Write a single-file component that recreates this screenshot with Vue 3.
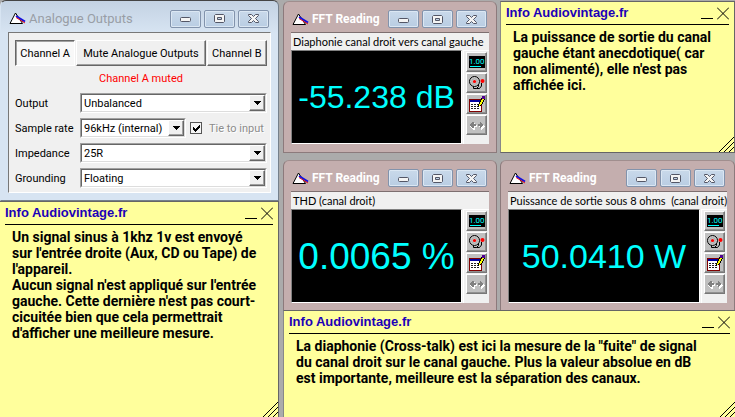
<script setup>
import { reactive } from 'vue'

const captions = ['Minimize', 'Maximize', 'Close']
const tools = ['digits', 'alarm', 'edit', 'range']

const fields = reactive([
  { id: 'output', label: 'Output', value: 'Unbalanced' },
  { id: 'rate', label: 'Sample rate', value: '96kHz (internal)', tie: true },
  { id: 'impedance', label: 'Impedance', value: '25R' },
  { id: 'grounding', label: 'Grounding', value: 'Floating' },
])

const columns = [
  [
    { id: 'outputs', kind: 'outputs', title: 'Analogue Outputs' },
    {
      id: 'note-signal',
      kind: 'note',
      text: "Un signal sinus à 1khz 1v est envoyé\nsur l'entrée droite (Aux, CD ou Tape) de\nl'appareil.\nAucun signal n'est appliqué sur l'entrée\ngauche. Cette dernière n'est pas court-\ncicuitée bien que cela permettrait\nd'afficher une meilleure mesure.",
    },
  ],
  [
    { id: 'crosstalk', kind: 'reading', title: 'FFT Reading', size: 'small', label: 'Diaphonie canal droit vers canal gauche', value: '-55.238 dB' },
    {
      id: 'note-power',
      kind: 'note',
      text: "La puissance de sortie du canal\ngauche étant anecdotique( car\nnon alimenté), elle n'est pas\naffichée ici.",
    },
    { id: 'thd', kind: 'reading', title: 'FFT Reading', size: 'large', label: 'THD (canal droit)', value: '0.0065 %' },
    { id: 'power', kind: 'reading', title: 'FFT Reading', size: 'medium', label: 'Puissance de sortie sous 8 ohms  (canal droit)', value: '50.0410 W' },
    {
      id: 'note-crosstalk',
      kind: 'note',
      wide: true,
      text: "La diaphonie (Cross-talk) est ici la mesure de la \"fuite\" de signal\ndu canal droit sur le canal gauche. Plus la valeur absolue en dB\nest importante, meilleure est la séparation des canaux.",
    },
  ],
]
</script>

<template>
  <main class="desktop">
    <div v-for="(column, i) in columns" :key="i" class="column">
      <template v-for="w in column" :key="w.id">
        <article v-if="w.kind === 'note'" class="note" :class="{ wide: w.wide }">
          <header>
            <h2>Info Audiovintage.fr</h2>
            <button type="button" aria-label="Minimize note">
              <svg width="12" height="13" viewBox="0 0 12 13"><path d="M0 11.5h12" stroke="#000" /></svg>
            </button>
            <button type="button" aria-label="Close note">
              <svg width="12" height="13" viewBox="0 0 12 13"><path d="M0 0.5l12 12M12 0.5l-12 12" stroke="#000" /></svg>
            </button>
          </header>
          <p>{{ w.text }}</p>
          <svg class="grip" width="15" height="15" viewBox="0 0 15 15">
            <path d="M0 15L15 0M5 15L15 5M10 15L15 10" stroke="#000" />
          </svg>
        </article>

        <section v-else class="window" :class="w.kind">
          <header class="titlebar">
            <svg class="logo" width="17" height="13" viewBox="0 0 17 13">
              <path d="M6.5 1L1 11.5H13.5Z" fill="#fff" stroke="#000" />
              <path d="M7 4L16 9.5" stroke="#1010e0" stroke-width="2" />
              <path d="M7 5.5L16 11" stroke="#e01020" stroke-width="1" />
            </svg>
            <h2>{{ w.title }}</h2>
            <div class="captions">
              <button v-for="c in captions" :key="c" type="button" :aria-label="c">
                <svg width="13" height="11" viewBox="0 0 13 11">
                  <rect v-if="c === 'Minimize'" x="1.5" y="4.5" width="10" height="4" rx="1" fill="#f4f4f4" stroke="#535666" />
                  <path v-else-if="c === 'Maximize'" d="M2.5 1.5h8l1 1v6l-1 1h-8l-1-1v-6zM4.5 4.5v2h4v-2z" fill="#f4f4f4" stroke="#535666" fill-rule="evenodd" />
                  <path v-else d="M1.5 1.5h3l2 2 2-2h3v1l-3 3 3 3v1h-3l-2-2-2 2h-3v-1l3-3-3-3z" fill="#f4f4f4" stroke="#535666" />
                </svg>
              </button>
            </div>
          </header>

          <form v-if="w.kind === 'outputs'" class="panel" @submit.prevent>
            <div class="channels">
              <button type="button" class="pressed">Channel A</button>
              <button type="button" class="mute">Mute Analogue Outputs</button>
              <button type="button">Channel B</button>
            </div>
            <p class="status">Channel A muted</p>
            <div v-for="f in fields" :key="f.id" class="field">
              <label :for="f.id">{{ f.label }}</label>
              <div class="combo" :class="{ narrow: f.tie }">
                <select :id="f.id" v-model="f.value">
                  <option>{{ f.value }}</option>
                </select>
                <span class="drop">
                  <svg width="7" height="4" viewBox="0 0 7 4" shape-rendering="crispEdges">
                    <path d="M0 0h7v1h-1v1h-1v1h-1v1h-1v-1h-1v-1h-1v-1h-1z" />
                  </svg>
                </span>
              </div>
              <label v-if="f.tie" class="tie">
                <span class="tick">
                  <input type="checkbox" checked />
                  <svg width="7" height="7" viewBox="0 0 7 7" shape-rendering="crispEdges">
                    <path d="M0 2h1v1h1v1h1v-1h1v-1h1v-1h1v-1h1v3h-1v1h-1v1h-1v1h-1v1h-1v-1h-1v-1h-1z" />
                  </svg>
                </span>
                Tie to input
              </label>
            </div>
          </form>

          <div v-else class="meter">
            <p class="caption">{{ w.label }}</p>
            <div class="meter-row">
              <output class="screen" :class="w.size">{{ w.value }}</output>
              <div class="tools">
                <button v-for="t in tools" :key="t" type="button" :aria-label="t">
                  <svg width="16" height="16" viewBox="0 0 16 16">
                    <g v-if="t === 'digits'">
                      <rect x="0" y="2" width="16" height="12" fill="#000" />
                      <text x="0" y="10" class="digits">1.00</text>
                      <rect x="1" y="12" width="11" height="1" fill="#0ff" />
                    </g>
                    <g v-else-if="t === 'alarm'">
                      <circle cx="5.5" cy="6.5" r="5" fill="#c8c8c8" stroke="#000" />
                      <circle cx="5.5" cy="6.5" r="2.8" fill="none" stroke="#aaa" />
                      <circle cx="5.5" cy="6.5" r="1.6" fill="#f00" />
                      <path d="M4.5 11.5v2h3l2-2v-2M7.5 13.5h3l2-2.5v-3" fill="none" stroke="#000" />
                      <circle cx="13.5" cy="6" r="2" fill="#f00" />
                    </g>
                    <g v-else-if="t === 'edit'" shape-rendering="crispEdges">
                      <rect x="0" y="3" width="13" height="13" fill="#800000" />
                      <rect x="1" y="4" width="11" height="11" fill="#fff" />
                      <rect x="1" y="4" width="11" height="2" fill="#0000a0" />
                      <path d="M2 8.5h9M2 10.5h9M2 12.5h9" stroke="#222" stroke-dasharray="2 1" />
                      <path d="M9 11V8h1V6h1V4h1V2h1V1h3v3h-1v2h-1v2h-1v1h-1v1h-2v1z" fill="#000" />
                      <path d="M10 10V8h1V6h1V4h1V3h2v1h-1v2h-1v2h-1v1h-1v1z" fill="#ff0" />
                      <rect x="13" y="0" width="3" height="3" fill="#500090" />
                    </g>
                    <g v-else shape-rendering="crispEdges">
                      <path d="M1 9h1v-1h1v-1h1v-1h2v2h2v2h-2v3h-2v-1h-1v-1h-1v-1h-1z M16 9h-1v-1h-1v-1h-1v-1h-1v2h-2v2h2v3h1v-1h1v-1h1v-1h1z" fill="#fff" />
                      <path d="M0 8h1v-1h1v-1h1v-1h2v2h2v2h-2v2h-2v-1h-1v-1h-1z M15 8h-1v-1h-1v-1h-1v-1h-1v2h-2v2h2v2h1v-1h1v-1h1v-1h1z" fill="#808080" />
                    </g>
                  </svg>
                </button>
              </div>
            </div>
          </div>
        </section>
      </template>
    </div>
  </main>
</template>

<style>
body {
  margin: 0;
  background: #ababab;
}
</style>

<style scoped>
.desktop {
  min-height: 100vh;
  display: grid;
  grid-template-columns: 279fr 452fr;
  column-gap: 4px;
  background: #ababab;
  font: 11px/13px Roboto, 'Liberation Sans', sans-serif;
  color: #000;
}
.column {
  display: grid;
  min-width: 0;
  grid-template-rows: auto 1fr;
}
.column + .column {
  grid-template-columns: 214fr 235fr;
  grid-template-rows: auto auto 1fr;
  column-gap: 3px;
}
h2, p { margin: 0; }
button, select, input { font: inherit; color: inherit; margin: 0; padding: 0; border-radius: 0; }
svg { display: block; flex: none; }

.window {
  box-sizing: border-box;
  min-width: 0;
  padding: 0 7px 7px;
  border: 1px solid #75808c;
  border-top-color: #444;
  border-radius: 6px 6px 0 0;
  background: linear-gradient(#c3d2e3, #d7e4f2 32px);
}
.outputs { border-left-color: #d7e4f2; }
.reading {
  margin-top: 1px;
  padding-bottom: 8px;
  border-color: #a08e8e #8c7a7c #8c7a7c;
  background: #c4aeae;
}
.note + .reading, .reading + .reading { margin-top: 7px; }

.titlebar {
  display: flex;
  align-items: center;
  height: 31px;
  padding: 4px 2px 0 1px;
  box-sizing: border-box;
}
.reading .titlebar { height: 30px; }
.titlebar h2 {
  flex: 1;
  margin-left: 3px;
  font-size: 13px;
  font-weight: normal;
  line-height: 18px;
  color: #999ea6;
  white-space: nowrap;
}
.reading h2 { font-weight: bold; font-size: 12px; color: #fff; }
.captions { display: flex; gap: 3px; }
.captions button {
  display: grid;
  place-items: center;
  width: 31px;
  height: 18px;
  border: 1px solid #8293ac;
  border-radius: 2px;
  background: linear-gradient(#c9d9ea, #b9cde3);
  box-shadow: inset 0 0 0 1px #dbe7f3;
}

.panel {
  padding: 7px 3px 4px 6px;
  border: 1px solid;
  border-color: #777 #fff #fff #777;
  background: #f0f0f0;
}
.channels { display: flex; gap: 1px; margin-bottom: 6px; }
.channels button {
  flex: 60 0 0;
  height: 26px;
  border: 1px solid;
  border-color: #fff #666 #666 #fff;
  box-shadow: inset -1px -1px #a0a0a0;
  background: #f0f0f0;
  white-space: nowrap;
}
.channels .mute { flex-grow: 131; }
.channels .pressed {
  border-color: #666 #fff #fff #666;
  box-shadow: inset 1px 1px #a0a0a0;
  background: #f8f8f8;
}
.status { color: #f00; text-align: center; margin-bottom: 8px; }
.field {
  display: flex;
  align-items: center;
  margin-bottom: 5px;
}
.field:last-child { margin-bottom: 0; }
.field > label:first-child { width: 65px; white-space: nowrap; }
.combo {
  flex: 1;
  display: grid;
  height: 20px;
  box-sizing: border-box;
  border: 1px solid;
  border-color: #a0a0a0 #fff #fff #a0a0a0;
}
.combo.narrow { flex: 0 0 106px; }
.combo > * { grid-area: 1 / 1; }
select {
  appearance: none;
  width: 100%;
  height: 18px;
  padding: 0 18px 0 2px;
  border: 1px solid #666;
  border-right-color: #ddd;
  border-bottom-color: #ddd;
  background: #fff;
  outline: 0;
}
.drop {
  justify-self: end;
  align-self: center;
  display: grid;
  place-items: center;
  width: 14px;
  height: 14px;
  margin-right: 1px;
  border: 1px solid;
  border-color: #fff #666 #666 #fff;
  box-shadow: inset -1px -1px #a0a0a0;
  background: #f0f0f0;
  pointer-events: none;
}
.tie {
  display: flex;
  align-items: center;
  gap: 7px;
  margin-left: 4px;
  color: #8c8c8c;
  text-shadow: 1px 1px #fff;
  white-space: nowrap;
}
.tick { display: grid; place-items: center; }
.tick > * { grid-area: 1 / 1; }
.tick svg { pointer-events: none; }
.tick input {
  appearance: none;
  width: 12px;
  height: 12px;
  border: 1px solid #555;
  background: #f4f4f4;
}

.meter {
  border-top: 1px solid #7d6f70;
  background: #f0f0f0;
}
.caption {
  height: 17px;
  padding-left: 2px;
  font-family: Lato, 'Liberation Sans', sans-serif;
  line-height: 17px;
  white-space: pre;
}
.meter-row { display: flex; }
.screen {
  flex: 1;
  display: flex;
  align-items: center;
  justify-content: center;
  min-width: 0;
  height: 92px;
  border: 1px solid;
  border-color: #808080 #fff #fff #808080;
  background: #000;
  color: #0ff;
  font-family: 'Liberation Sans', Arial, sans-serif;
  white-space: nowrap;
}
.small { font-size: 32px; }
.medium { font-size: 34px; }
.large { font-size: 37px; }
.tools {
  display: flex;
  flex-direction: column;
  gap: 1px;
  margin-left: 1px;
  padding: 1px 2px 0;
  border-left: 1px solid #fff;
  border-top: 1px solid #fff;
}
.tools button {
  display: grid;
  place-items: center;
  width: 21px;
  height: 20px;
  border: 1px solid;
  border-color: #fff #777 #777 #fff;
  box-shadow: inset -1px -1px #909090;
  background: #c0c0c0;
}
.digits { font: 8px Roboto, 'Liberation Sans', sans-serif; fill: #0ff; }

.note {
  position: relative;
  display: flow-root;
  min-width: 0;
  border: 1px solid #666;
  border-left-color: #888;
  background: #ffff9c;
}
.column:first-child .note { border-left: 0; border-bottom: 0; }
.column + .column .note { margin-top: 1px; }
.column + .column .note.wide {
  grid-column: 1 / -1;
  margin-top: -2px;
  border-right: 0;
  border-bottom: 0;
}
.note header {
  display: flex;
  align-items: center;
  gap: 4px;
  height: 22px;
  margin: 0 5px;
  border-bottom: 1px solid #000;
}
.note h2 {
  flex: 1;
  font: bold 13px/20px 'Liberation Sans', Arial, sans-serif;
  color: #1c00b8;
}
.note header button { border: 0; background: none; }
.note p {
  margin: 4px 0 16px 12px;
  font: bold 14px/16px Roboto, 'Liberation Sans', sans-serif;
  white-space: pre;
}
.grip { position: absolute; right: 0; bottom: 0; }
</style>
